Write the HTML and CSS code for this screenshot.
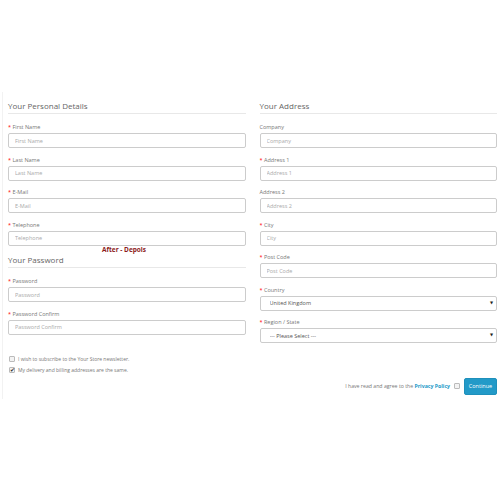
FILE: index.html
```html
<!DOCTYPE html>
<html lang="en">
<head>
    <meta charset="UTF-8">
    <title>Register Account</title>
    <link rel="stylesheet" href="styles.css">
</head>
<body>
    <div class="page">
        <div class="columns">
            <div class="col left">
                <div class="legend">Your Personal Details</div>
                <div class="group">
                    <label class="req">First Name</label>
                    <input type="text" placeholder="First Name">
                </div>
                <div class="group">
                    <label class="req">Last Name</label>
                    <input type="text" placeholder="Last Name">
                </div>
                <div class="group">
                    <label class="req">E-Mail</label>
                    <input type="text" placeholder="E-Mail">
                </div>
                <div class="group">
                    <label class="req">Telephone</label>
                    <input type="text" placeholder="Telephone">
                </div>
                <div class="stamp">After - Depois</div>
                <div class="legend pw">Your Password</div>
                <div class="group">
                    <label class="req">Password</label>
                    <input type="password" placeholder="Password">
                </div>
                <div class="group">
                    <label class="req">Password Confirm</label>
                    <input type="password" placeholder="Password Confirm">
                </div>
            </div>
            <div class="col right">
                <div class="legend">Your Address</div>
                <div class="group">
                    <label>Company</label>
                    <input type="text" placeholder="Company">
                </div>
                <div class="group">
                    <label class="req">Address 1</label>
                    <input type="text" placeholder="Address 1">
                </div>
                <div class="group">
                    <label>Address 2</label>
                    <input type="text" placeholder="Address 2">
                </div>
                <div class="group">
                    <label class="req">City</label>
                    <input type="text" placeholder="City">
                </div>
                <div class="group">
                    <label class="req">Post Code</label>
                    <input type="text" placeholder="Post Code">
                </div>
                <div class="group">
                    <label class="req">Country</label>
                    <div class="select-wrap">
                        <select><option>United Kingdom</option></select>
                    </div>
                </div>
                <div class="group">
                    <label class="req">Region / State</label>
                    <div class="select-wrap">
                        <select><option>--- Please Select ---</option></select>
                    </div>
                </div>
            </div>
        </div>

        <div class="checks">
            <label class="check"><input type="checkbox" class="box"> I wish to subscribe to the Your Store newsletter.</label>
            <label class="check"><input type="checkbox" class="box" checked> My delivery and billing addresses are the same.</label>
        </div>

        <div class="buttons">
            <span>I have read and agree to the <a href="#">Privacy Policy</a></span>
            <input type="checkbox" class="box agree">
            <button>Continue</button>
        </div>
    </div>
</body>
</html>
```

FILE: styles.css
```css
body {
    margin: 0;
    font-family: "Open Sans", "DejaVu Sans", sans-serif;
    color: #666;
    background: #fff;
}
.page {
    margin-top: 92px;
    height: 307px;
    border-left: 1px solid #f2f2f2;
    margin-left: 2px;
    padding: 7px 3px 0 5px;
    box-sizing: border-box;
}
.columns {
    display: flex;
    gap: 14px;
}
.col {
    flex: 1;
    position: relative;
}
.legend {
    font-size: 8px;
    line-height: 14px;
    color: #666;
    border-bottom: 1px solid #e8e8e8;
    margin-bottom: 9px;
}
.group {
    margin-bottom: 7.5px;
}
label {
    display: block;
    font-size: 5.5px;
    line-height: 8px;
    color: #777;
    margin-bottom: 2px;
}
label.req::before {
    content: "* ";
    color: #f00;
}
input[type=text], input[type=password], select {
    display: block;
    width: 100%;
    height: 15px;
    box-sizing: border-box;
    border: 1px solid #ccc;
    border-radius: 2px;
    padding: 0 6px;
    font-family: inherit;
    font-size: 5.5px;
    color: #555;
    background: #fff;
    margin: 0;
}
input::placeholder {
    color: #aaa;
}
.select-wrap {
    position: relative;
}
select {
    appearance: none;
    -webkit-appearance: none;
    padding-left: 9px;
}
.select-wrap::after {
    content: "▼";
    position: absolute;
    right: 4px;
    top: 4px;
    font-size: 4px;
    color: #222;
}
.stamp {
    position: absolute;
    left: 94px;
    top: 146px;
    font-size: 6.5px;
    font-weight: bold;
    color: #8b1a1a;
}
.checks {
    margin-top: 3px;
}
.check {
    display: flex;
    align-items: center;
    gap: 3px;
    font-size: 5px;
    line-height: 11px;
    color: #777;
    margin: 0;
}
.box {
    appearance: none;
    -webkit-appearance: none;
    position: relative;
    width: 6px;
    height: 6px;
    margin: 0 0 0 1px;
    border: 1px solid #bbb;
    border-radius: 1px;
    background: #f3f3f3;
    box-sizing: border-box;
}
.box:checked::after {
    content: "✔";
    position: absolute;
    left: 0;
    top: -2px;
    font-size: 6px;
    line-height: 8px;
    color: #333;
}
.buttons {
    display: flex;
    justify-content: flex-end;
    align-items: center;
    gap: 3px;
    margin-top: 2px;
    font-size: 5.2px;
    color: #777;
}
.buttons a {
    color: #229ac8;
    font-weight: bold;
    text-decoration: none;
}
.agree {
    margin: 0 1px;
}
button {
    background: #229ac8;
    color: #fff;
    border: 1px solid #1f90bb;
    border-radius: 2px;
    font-family: inherit;
    font-size: 5.5px;
    width: 33px;
    height: 17px;
    padding: 0;
}
```
